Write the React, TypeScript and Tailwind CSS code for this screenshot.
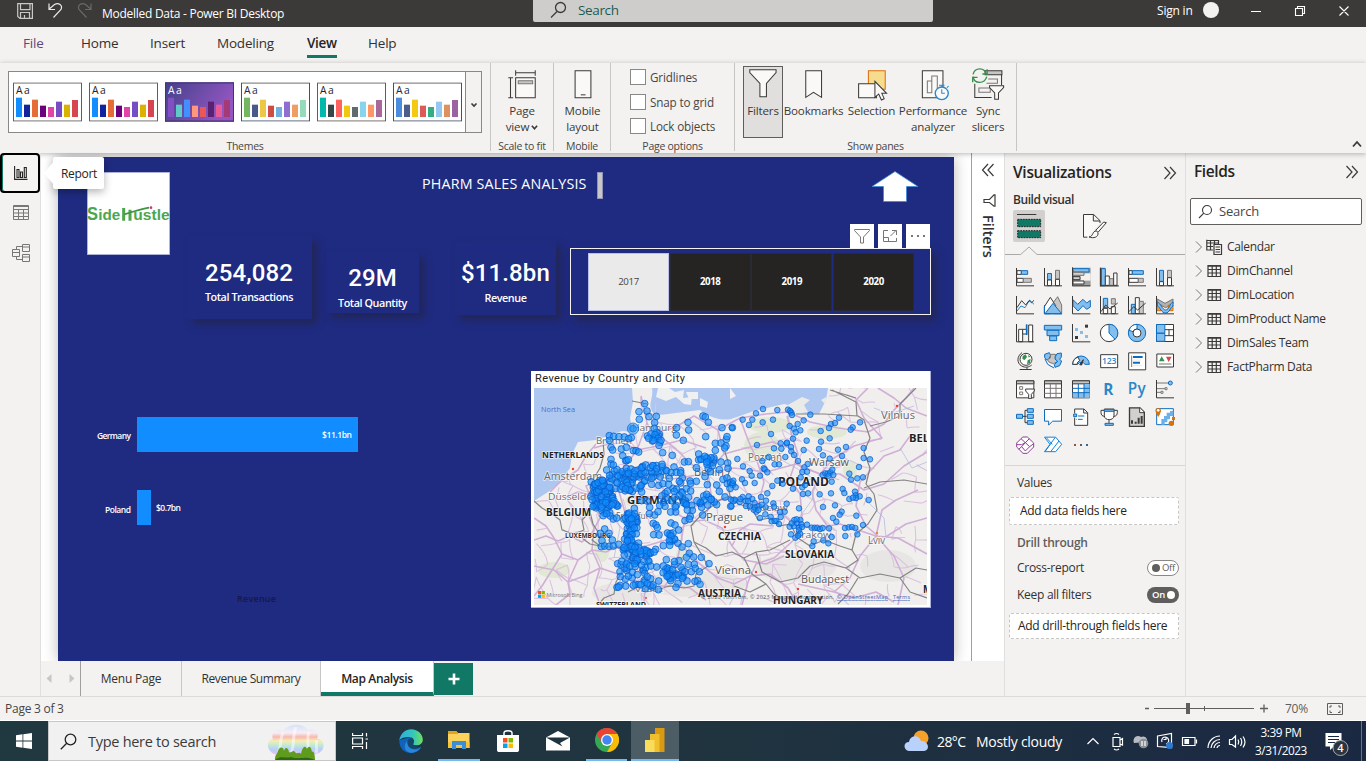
import React from "react";

const D = "#3b3a39";
const B = "#0f6cbd";
const L = "#83beec";
const G = "#c8c6c4";
const GR = "#797775";
const W = "#ffffff";
const O = "#d8700c";

type Shape = [d: string, fill: string, stroke?: string, width?: number];

const box = (x: number, y: number, w: number, h: number) => `M${x} ${y}h${w}v${h}h${-w}z`;
const dot = (x: number, y: number, r: number) => `M${x - r} ${y}a${r} ${r} 0 1 0 ${2 * r} 0a${r} ${r} 0 1 0 ${-2 * r} 0z`;

function Glyph({ view, shapes, className }: { view: string; shapes: Shape[]; className: string }) {
  return (
    <svg viewBox={view} className={className} preserveAspectRatio="none">
      {shapes.map(([d, fill, stroke, width], i) => (
        <path key={i} d={d} fill={fill} stroke={stroke ?? "none"} strokeWidth={width ?? 3} />
      ))}
    </svg>
  );
}

/* ---------- Title bar ---------- */

function TitleBar() {
  return (
    <div className="flex h-[27px] bg-[#3b3a39] text-white">
      <div className="flex w-[533px] items-start">
        <svg viewBox="0 0 102 27" className="h-[27px] w-[102px]" fill="none" stroke="#c9c8c7" strokeWidth="1.2">
          <path d="M17.7 3.6H32.400V18.400H20L17.700 16.500ZM20.500 3.600V9.600H30V3.600M20.500 18.400V12.500H29.500V18.400M24.500 15V18" />
          <path d="M49 3.500V9.500H55M49.200 9L54.500 4.600C58.500 2 63 5.500 61 9.500L53.500 17.500" stroke="#e8e8e8" />
          <path d="M91 3.500V9.500H85M90.800 9L85.500 4.600C81.500 2 77 5.500 79 9.500L86.500 17.500" stroke="#6b6967" />
        </svg>
        <span className="mt-[5px] text-[12px] leading-[17px] tracking-[-0.27px]">Modelled Data - Power BI Desktop</span>
      </div>
      <div className="flex h-[22px] w-[400px] items-start rounded-b-[2px] bg-[#cfcdcc] pl-[17px] text-[#1b5c50]">
        <svg viewBox="0 0 17 20" className="h-[20px] w-[17px]" fill="none" stroke="#3b3a39" strokeWidth="1.3">
          <circle cx="10.500" cy="7.500" r="5" />
          <path d="M7 11.500L1 17.500" />
        </svg>
        <span className="ml-[11px] mt-[1px] text-[13.5px] leading-[18px] tracking-[-0.35px]">Search</span>
      </div>
      <div className="flex flex-1 items-start">
        <span className="ml-[224px] mt-[3px] w-[46px] text-[12px] leading-[16px] tracking-[-0.2px]">Sign in</span>
        <span className="mt-[2px] size-[16px] rounded-full bg-[#f3f2f1]" />
        <svg viewBox="0 0 147 27" className="h-[27px] w-[147px]" fill="none" stroke="#fff" strokeWidth="1.100">
          <path d="M32 11.500H42M78.500 8.500V6.500H85.500V13.500H83.500M76.500 8.500H83.500V15.500H76.500ZM120.500 6.500L129.500 15.500M129.500 6.500L120.500 15.500" />
        </svg>
      </div>
    </div>
  );
}

/* ---------- Ribbon ---------- */

function RibbonTabs() {
  return (
    <div className="flex h-[36px] items-start pt-[7px] text-[13.5px] leading-[19px] tracking-[-0.2px] text-[#323130]">
      <span className="w-[59px] pl-[23px] text-[#5b4a78]">File</span>
      <span className="ml-[22px] w-[69px]">Home</span>
      <span className="w-[67px]">Insert</span>
      <span className="w-[90px]">Modeling</span>
      <span className="h-[24px] w-[30px] border-b-[3px] border-[#117865] font-semibold tracking-[-0.3px] text-[#252423]">View</span>
      <span className="ml-[31px]">Help</span>
    </div>
  );
}

const heights = [58, 37, 52, 34, 30, 46, 37, 51];
const themes = [
  { aa: "#252423", edge: "#605e5c", c: ["#118dff", "#12239e", "#e66c37", "#6b007b", "#e044a7", "#744ec2", "#d9b300", "#d64550"] },
  { aa: "#252423", edge: "#605e5c", c: ["#118dff", "#12239e", "#e66c37", "#6b007b", "#e044a7", "#744ec2", "#d9b300", "#d64550"] },
  { aa: "#ffffff", edge: "#43356b", c: ["#8250c4", "#5ecbc8", "#438fff", "#ff977e", "#eb5757", "#5b2071", "#ec5a96", "#a43b76"] },
  { aa: "#1b2a4a", edge: "#47506b", c: ["#73b761", "#4a588a", "#ecc846", "#cd4c46", "#71afe2", "#8d6fd1", "#ee9e64", "#95dabb"] },
  { aa: "#252423", edge: "#605e5c", c: ["#01b8aa", "#374649", "#fd625e", "#f2c80f", "#5f6b6d", "#8ad4eb", "#fe9666", "#a66999"] },
  { aa: "#1b2a4a", edge: "#47506b", c: ["#4a8ddc", "#4c5d8a", "#f3c911", "#dc5b57", "#33ae81", "#95c8f0", "#dd915f", "#9a64a0"] },
];

function ThemeThumb({ theme, index }: { theme: (typeof themes)[number]; index: number }) {
  return (
    <svg viewBox="0 0 207 120" className="h-[40px] w-[69px]">
      <defs>
        <linearGradient id="purple" x1="0" x2="1" y1="0" y2="0.4">
          <stop offset="0" stopColor="#44418a" />
          <stop offset="1" stopColor="#9256c2" />
        </linearGradient>
      </defs>
      <rect x="1.500" y="3" width="204" height="114" fill={index === 2 ? "url(#purple)" : "#fff"} stroke={theme.edge} strokeWidth="3" />
      <path d="M0 1.500H207M0 118.500H207" stroke={index === 2 ? "#5a4a90" : "#c8c6c4"} strokeWidth="3" />
      <text x="9" y="37" fontSize="31" fill={theme.aa} textLength="41">Aa</text>
      {heights.map((h, i) => (
        <rect key={i} x={9 + i * 24} y={105 - h} width="18" height={h} fill={theme.c[i]} />
      ))}
    </svg>
  );
}

function Group({ label, width, children }: { label: string; width: string; children: React.ReactNode }) {
  return (
    <div className={`flex h-[88px] flex-col border-r border-[#c8c6c4] ${width}`}>
      <div className="flex h-[76px] shrink-0">{children}</div>
      <div className="text-center text-[10.500px] leading-[15px] tracking-[-0.25px] text-[#484644]">{label}</div>
    </div>
  );
}

const ribbonIcons: Record<string, Shape[]> = {
  page: [
    ["M103.500 210V226M160.500 210V226M103.500 217.500H160.500M82 232.500H96M82 292.500H96M88.500 232.500V292.500", "none", D],
    [box(103.500, 232.500, 57, 60), "#faf9f8", D],
    [box(111, 241, 42, 9), G, GR],
  ],
  mobile: [[box(274.500, 211.500, 46, 81), "#faf9f8", D], ["M291 283.500H305", "none", D]],
  filters: [["M781.500 211.500H858V220L830 252V292.500H811V252L781.500 220Z", "#faf9f8", D]],
  bookmarks: [["M945.500 211.500H991.500V291L968 276L945.500 291Z", "#faf9f8", D]],
  selection: [
    [box(1125, 211.500, 49, 55), "#f8dc8e", O],
    [box(1096.500, 250.500, 52, 42), "#faf9f8", D],
    ["M1144 243V291L1155 281L1163 299L1171 295L1164 279H1178Z", "#faf9f8", D],
  ],
  performance: [
    [box(1285.500, 211.500, 60, 81), "#faf9f8", D],
    ["M1300 277V242H1313V277ZM1313 277V227H1329V277", "none", GR],
    [dot(1342, 279, 19), "#faf9f8", "#2b88c8", 4],
    ["M1342 267V279H1351M1334 255H1350M1342 255V261M1357 262L1362 257", "none", "#2b88c8"],
  ],
  sync: [
    [box(1466, 211.500, 49, 12), G, D],
    ["M1514 223V254M1436 250V291.500H1485", "none", D],
    ["M1475 236H1502V249H1470M1448 263H1481V276H1448Z", "none", GR],
    ["M1479 256.500H1520V262L1505 278V297H1494V278L1479 262Z", "#faf9f8", D],
    ["M1431 222C1436 200 1465 200 1469 222M1471 229C1464 252 1435 252 1431 229", "none", "#35914a", 4],
    ["M1458 221H1472V207M1444 231H1430V246", "none", "#35914a", 4],
  ],
};

function RibbonButton({ icon, view, lines, width, active }: { icon: string; view: string; lines: React.ReactNode[]; width: string; active?: boolean }) {
  return (
    <div className={`mt-[3px] flex h-[72px] shrink-0 flex-col items-center ${width} ${active ? "border border-[#605e5c] bg-[#e1dfdd]" : "pt-px"}`}>
      <Glyph view={view} shapes={ribbonIcons[icon]} className="h-[34px] w-[34px] shrink-0" />
      <div className="mt-[2px] text-center text-[11.600px] leading-[15.600px] tracking-[-0.17px] text-[#3b3a39]">
        {lines.map((l, i) => (
          <div key={i} className="whitespace-nowrap">{l}</div>
        ))}
      </div>
    </div>
  );
}

function Ribbon() {
  return (
    <div className="relative z-10 flex h-[90px] bg-[#f3f2f1] shadow-[0_1px_5px_rgba(0,0,0,0.28)]">
      <Group label="Themes" width="w-[491px]">
        <div className="ml-[8px] mt-[8px] flex h-[62px] w-[474px] border border-[#8a8886] bg-white">
          <div className="flex flex-1 gap-[7px] pl-[4px] pt-[10px]">
            {themes.map((t, i) => (
              <ThemeThumb key={i} theme={t} index={i} />
            ))}
          </div>
          <div className="flex w-[16px] items-center justify-center border-l border-[#8a8886] bg-[#f3f2f1]">
            <svg viewBox="0 0 8 8" className="mt-[6px] size-[8px]" fill="none" stroke={D} strokeWidth="1.600">
              <path d="M1.500 2.500L4 5L6.500 2.500" />
            </svg>
          </div>
        </div>
      </Group>
      <Group label="Scale to fit" width="w-[63px]">
        <RibbonButton
          icon="page"
          view="72.500 200 99 102"
          width="w-[62px]"
          lines={["Page", <span key="v" className="flex items-center justify-center">view<svg viewBox="0 0 8 8" className="ml-[2px] mt-[2px] size-[7px]" fill="none" stroke={D} strokeWidth="1.800"><path d="M1 2L4 5.500L7 2" /></svg></span>]}
        />
      </Group>
      <Group label="Mobile" width="w-[57px]">
        <RibbonButton icon="mobile" view="248 200 99 102" width="w-[57px]" lines={["Mobile", "layout"]} />
      </Group>
      <Group label="Page options" width="w-[124px]">
        <div className="ml-[19px] mt-[6px] flex flex-col gap-[8.500px]">
          {["Gridlines", "Snap to grid", "Lock objects"].map((t) => (
            <div key={t} className="flex h-[16px] items-center text-[11.700px] tracking-[-0.15px] text-[#484644]">
              <span className="mr-[4px] size-[16px] border border-[#8a8886] bg-white" />
              <span className="mt-[2px] whitespace-nowrap">{t}</span>
            </div>
          ))}
        </div>
      </Group>
      <Group label="Show panes" width="w-[282px]">
        <div className="ml-[8px] flex">
          <RibbonButton icon="filters" view="770.500 203 99 102" width="w-[40px]" lines={["Filters"]} active />
          <RibbonButton icon="bookmarks" view="920 200 99 102" width="w-[61px]" lines={["Bookmarks"]} />
          <RibbonButton icon="selection" view="1086 200 99 102" width="w-[55px]" lines={["Selection"]} />
          <RibbonButton icon="performance" view="1267 200 99 102" width="w-[68px]" lines={["Performance", "analyzer"]} />
          <RibbonButton icon="sync" view="1425 200 99 102" width="w-[42px]" lines={["Sync", "slicers"]} />
        </div>
      </Group>
      <div className="flex flex-1 items-end justify-end pb-[5px] pr-[4px]">
        <svg viewBox="0 0 10 8" className="h-[8px] w-[10px]" fill="none" stroke={D} strokeWidth="1.800">
          <path d="M1 6.500L5 2L9 6.500" />
        </svg>
      </div>
    </div>
  );
}

/* ---------- Left rail ---------- */

function Rail() {
  return (
    <div className="relative z-20 w-[41px] shrink-0 border-r border-[#e1dfdd] bg-[#f3f2f1]">
      <div className="flex h-[40px] w-[40px] items-center justify-center rounded-[4px] border-2 border-black bg-[#f5f4f3] shadow-[inset_1px_0_0_#117865]">
        <svg viewBox="0 0 14 14" className="ml-[1px] size-[14px]" fill="none" stroke="#252423" strokeWidth="1.100">
          <path d="M.600 0V13.400H13.500M3 3.500H5V11.500H3ZM6.500 6H8.500V11.500H6.500ZM10.300 1.500H12.300V11.500H10.300Z" />
        </svg>
      </div>
      <svg viewBox="0 0 40 80" className="h-[80px] w-[40px]" fill="none" stroke="#797775" strokeWidth="1">
        <path d="M13.500 12.500H28.500V26.500H13.500ZM13.500 13.500H28.500M13.500 16.500H28.500M13.500 20H28.500M13.500 23.500H28.500M18.500 16.500V26.500M23.500 16.500V26.500" />
        <path d="M12.500 56.500H19.500V63.500H12.500ZM12.500 59.500H19.500M22.500 51.500H29.500V58.500H22.500ZM22.500 54H29.500M22.500 61.500H29.500V68.500H22.500ZM22.500 64H29.500M16.500 56.500V53.500H22.500M16.500 63.500V66.500H22.500" />
      </svg>
      <div className="absolute left-[53px] top-[4px] flex h-[32px] w-[51px] items-center rounded-[2px] bg-white pl-[8px] pt-[2px] text-[12px] tracking-[-0.3px] text-[#252423] shadow-[0_3px_9px_rgba(0,0,0,0.3)]">
        <svg viewBox="0 0 10 24" className="absolute -left-[9px] top-[4px] h-[24px] w-[10px]">
          <path d="M10 0L0 12L10 24Z" fill="#fff" />
        </svg>
        Report
      </div>
    </div>
  );
}

/* ---------- Report canvas ---------- */

function Card({ value, label, className, labelGap }: { value: string; label: string; className: string; labelGap: string }) {
  return (
    <div className={`flex flex-col items-center shadow-[5px_5px_7px_rgba(34,38,84,0.9)] ${className}`}>
      <div className="whitespace-nowrap font-['Roboto'] text-[24px] font-medium leading-[26px] tracking-[0.1px] text-white">{value}</div>
      <div className={`whitespace-nowrap text-[10.800px] font-semibold leading-[14px] tracking-[-0.42px] text-white ${labelGap}`}>{label}</div>
    </div>
  );
}

function Logo() {
  return (
    <svg viewBox="0 0 249 249" className="ml-[29px] mt-[15px] h-[83px] w-[83px] shrink-0">
      <rect x="1" y="1" width="247" height="247" fill="#fff" stroke="#aab2da" strokeWidth="2" />
      <g fill="#4da64d" fontFamily="Liberation Sans" fontWeight="700" fontSize="45">
        <text x="0" y="145" fontSize="56" textLength="33" lengthAdjust="spacingAndGlyphs">S</text>
        <text x="34" y="145" textLength="66" lengthAdjust="spacingAndGlyphs">ide</text>
        <text x="139" y="145" textLength="109" lengthAdjust="spacingAndGlyphs">ustle</text>
      </g>
      <path d="M110 108V146M129 113V146" stroke="#4da64d" strokeWidth="9" />
      <path d="M112 127C128 122 160 112 186 107" stroke="#3d9442" strokeWidth="5" fill="none" />
      <circle cx="192" cy="107" r="4" fill="#d6336c" />
    </svg>
  );
}

function Slicer() {
  return (
    <div className="w-[361px]">
      <div className="flex justify-end gap-[4px] pr-px">
        <div className="flex size-[24px] items-center justify-center bg-white">
          <svg viewBox="0 0 16 16" className="size-[16px]" fill="none" stroke="#797775" strokeWidth="1">
            <path d="M.500 1.500H15.500V2.500L9.500 9V15H6.500V9L.500 2.500Z" />
          </svg>
        </div>
        <div className="flex size-[24px] items-center justify-center bg-white">
          <svg viewBox="0 0 16 16" className="size-[16px]" fill="none" stroke="#797775" strokeWidth="1">
            <path d="M6 2.500H1.500V13.500H14.500V10M1.500 9.500H6.500V13.500M8.500 8L14 2.500M10 2.500H14.500V7" />
          </svg>
        </div>
        <div className="flex size-[24px] items-center justify-center gap-[4px] bg-white">
          <span className="size-[2px] bg-[#797775]" />
          <span className="size-[2px] bg-[#797775]" />
          <span className="size-[2px] bg-[#797775]" />
        </div>
      </div>
      <div className="flex h-[67px] gap-[0.700px] border border-[#f3f2f1] pl-[17px] pt-[4px] shadow-[5px_6px_8px_rgba(34,38,84,0.9)]">
        {["2017", "2018", "2019", "2020"].map((y, i) => (
          <div
            key={y}
            className={`flex h-[58px] w-[81px] items-center justify-center text-[9.700px] tracking-[-0.4px] ${i === 0 ? "border border-[#b9c0e8] bg-[#eaeaea] text-[#484644]" : "border border-[#2a2a35] bg-[#252423] font-bold text-white"}`}
          >
            {y}
          </div>
        ))}
      </div>
    </div>
  );
}

function BarChart() {
  return (
    <svg viewBox="58 371 473 290" className="h-[290px] w-[473px] shrink-0">
      <rect x="137" y="417" width="221" height="35" fill="#118dff" />
      <rect x="137" y="490" width="14" height="35" fill="#118dff" />
      <g fill="#fff" fontSize="8.500" fontWeight="600">
        <text x="97" y="439" textLength="34">Germany</text>
        <text x="105" y="513" textLength="26">Poland</text>
        <text x="322" y="438" textLength="30">$11.1bn</text>
        <text x="156" y="511" textLength="25">$0.7bn</text>
      </g>
      <text x="237" y="602" fontSize="9" fontWeight="600" fill="#17184a" textLength="39">Revenue</text>
    </svg>
  );
}

/* ---------- Map ---------- */

const westPoints = `359 116 342 140 366 138 372 155 394 154 343 163 389 173 324 191 388 190 319 218 253 212 266 214 282 215 298 216 311 221 253 226 258 247 263 255 289 252 304 247 325 257 333 257 341 261 367 213 378 207 390 209 399 220 405 232 402 241 385 226 371 220 408 226 455 188 454 210 475 226 491 195 489 172 534 153 541 156 550 172 591 188 622 188 542 215 571 235 588 234 604 223 606 215 603 243 599 249 571 256 521 267 413 263 442 271 447 306 478 291 490 290 467 317 514 308 588 291 608 294 583 314 609 310 258 283 258 297 265 300 293 272 302 287 305 287 310 284 245 315 268 318 276 314 304 310 318 312 310 325 330 317 350 308 362 300 376 308 384 302 395 311 412 305 411 298 425 318 439 323 454 322 467 324 472 339 467 354 463 349 495 348 514 349 497 355 540 335 547 359 556 320 575 360 583 379 594 343 606 339 607 356 617 352 623 358 615 370 600 396 617 424 625 407 575 419 568 411 559 402 551 396 545 388 548 420 558 404 530 427 533 450 516 407 502 436 487 435 496 454 480 467 493 462 452 441 451 426 437 441 420 424 404 421 389 450 374 427 373 446 399 440 366 408 350 407 350 381 380 358 401 361 414 356 431 358 433 340 427 379 448 379 449 397 463 392 484 371 497 378 328 430 329 446 319 461 256 453 265 462 275 459 245 446 239 492 226 505 252 505 262 525 231 527 229 545 239 543 252 544 265 543 281 538 297 548 385 475 393 480 397 488 386 509 402 510 438 474 450 480 461 495 444 504 438 513 433 527 434 541 415 542 459 535 471 546 490 536 493 565 484 577 462 587 448 590 424 584 415 603 395 606 377 603 392 553 387 561 506 576 529 577 552 596 508 598 490 598 480 620 499 620 511 610 523 620 518 647 525 658 510 649 486 648 472 640 459 655 453 667 437 647 426 634 401 648 377 641 400 674 384 660 367 656 361 671 347 659 325 661 302 663 285 661 276 667 281 666 285 620 286 635 310 633 322 622 337 629 359 625 367 635 278 596 290 589 304 597 315 603 329 596`
  .split(" ").map(Number);

const eastPoints = `6 188 38 164 78 145 99 132 142 135 174 134 180 138 184 143 186 150 241 149 327 158 67 164 57 180 98 172 129 164 221 166 203 177 179 183 192 191 197 202 211 196 303 177 315 174 297 189 272 198 390 172 368 187 362 194 123 207 81 240 189 221 230 227 273 230 299 220 152 235 170 235 171 233 132 250 154 251 183 246 184 259 192 270 221 255 267 252 324 254 348 246 401 249 401 279 420 283 279 271 336 273 299 281 166 276 116 276 97 288 22 282 39 304 59 318 65 332 101 310 104 313 112 322 90 332 134 298 147 298 204 288 233 297 223 307 217 321 231 320 212 337 36 343 45 354 74 354 8 354 17 367 142 347 158 356 127 363 189 371 217 367 225 360 219 387 234 385 269 388 303 385 305 350 278 330 286 325 293 326 301 322 307 314 296 332 310 330 358 326 363 344 382 340 399 337 387 306 338 372 343 384 375 380 377 391 389 394 378 399 358 402 369 398 416 405 112 385 93 396 108 407 130 415 56 394 38 396 29 411 14 404 3 404 47 408 67 402 74 414 48 423 60 424 75 427 86 424 95 419 79 440 71 434 85 435 106 448 90 459 107 427 122 456 125 469 139 468 147 477 134 468 152 456 164 440 150 441 132 425 170 416 207 430 279 426 315 421 335 440 329 449 309 459 319 470 379 452 399 480 231 479 179 485 192 483 201 474 211 465 214 478 207 488 216 486 193 465 200 463 185 475 207 496 210 506 196 518 183 508 204 512 245 488 254 489 262 489 270 492 278 489 297 490 251 529 280 526 247 543 295 535 305 516 346 513 345 489 356 487 366 486 376 489 382 508 4 423 31 402 54 408 10 347`
  .split(" ").map(Number);

const clusters = [
  [228, 395, 36, 44, 62], [300, 350, 60, 32, 50], [375, 320, 55, 20, 20], [250, 430, 30, 28, 20], [316, 480, 26, 38, 38],
  [318, 548, 26, 40, 30], [355, 585, 36, 32, 28], [448, 622, 36, 26, 22], [548, 295, 32, 22, 16], [446, 405, 50, 36, 12],
  [508, 408, 36, 26, 12], [436, 520, 14, 26, 7], [385, 215, 24, 18, 6], [305, 620, 28, 36, 8], [365, 655, 34, 14, 6], [218, 355, 22, 18, 12],
];

function randomizer(start: number) {
  let seed = start;
  return () => {
    seed = (seed * 16807) % 2147483647;
    return seed / 2147483647;
  };
}

function scatter() {
  const next = randomizer(7);
  const out: number[] = [];
  for (const [cx, cy, rx, ry, n] of clusters) {
    for (let i = 0; i < n; i++) {
      const a = next() * Math.PI * 2;
      const r = Math.sqrt(next());
      out.push(cx + Math.cos(a) * r * rx, cy + Math.sin(a) * r * ry);
    }
  }
  return out;
}

/* Secondary roads: a jittered grid of towns joined to their neighbours. */
function minorRoads() {
  const next = randomizer(4211);
  const cols = 31;
  const rows = 18;
  const node = Array.from({ length: cols * rows }, (_, i) => [
    (i % cols) * 13.3 - 2 + (next() - 0.5) * 10,
    Math.floor(i / cols) * 13 - 2 + (next() - 0.5) * 10,
  ]);
  const land = ([x, y]: number[]) => (x < 98 ? y > 112 - x * 0.78 : x < 128 ? y > 2 : x < 292 ? y > 30 : true);
  let d = "";
  const link = (a: number[], b: number[], p: number) => {
    const roll = next();
    const jx = (next() - 0.5) * 5;
    const jy = (next() - 0.5) * 5;
    if (roll > p || !land(a) || !land(b)) return;
    d += `M${a[0].toFixed(1)} ${a[1].toFixed(1)}Q${((a[0] + b[0]) / 2 + jx).toFixed(1)} ${((a[1] + b[1]) / 2 + jy).toFixed(1)} ${b[0].toFixed(1)} ${b[1].toFixed(1)}`;
  };
  for (let r = 0; r < rows - 1; r++) {
    for (let c = 0; c < cols - 1; c++) {
      const p = c > 23 ? 0.16 : 0.42;
      const i = r * cols + c;
      link(node[i], node[i + 1], p);
      link(node[i], node[i + cols], p);
      link(node[i], node[i + cols + 1], p * 0.5);
    }
  }
  return d;
}

function Bubbles({ points, r }: { points: number[]; r: number }) {
  const pairs: [number, number][] = [];
  for (let i = 0; i + 1 < points.length; i += 2) pairs.push([points[i], points[i + 1]]);
  return (
    <g fill="#118dff" fillOpacity="0.6" stroke="#0a5cc8" strokeOpacity="0.85" strokeWidth="2.600">
      {pairs.map(([x, y], i) => (
        <circle key={i} cx={x} cy={y} r={r} />
      ))}
    </g>
  );
}

const labels: { t: string; x: number; y: number; w: number; s: number; c: string; b?: boolean }[] = [
  { t: "North Sea", x: 7, y: 23.5, w: 34, s: 7.5, c: "#4a6fc4" },
  { t: "Hamburg", x: 98, y: 43, w: 45, s: 9.5, c: "#6b6b70" },
  { t: "Bremen", x: 62, y: 56, w: 36, s: 9.5, c: "#6b6b70" },
  { t: "NETHERLANDS", x: 8, y: 69.5, w: 62, s: 8.5, c: "#222", b: true },
  { t: "Amsterdam", x: 10, y: 92, w: 58, s: 10, c: "#66666b" },
  { t: "Hannover", x: 95, y: 91, w: 45, s: 10, c: "#6b6b70" },
  { t: "Berlin", x: 160, y: 88, w: 30, s: 10.5, c: "#55555a" },
  { t: "Düsseldorf", x: 14, y: 112, w: 52, s: 9.5, c: "#6b6b70" },
  { t: "GERMANY", x: 93, y: 116, w: 57, s: 11, c: "#222", b: true },
  { t: "BELGIUM", x: 12, y: 128, w: 45, s: 10, c: "#222", b: true },
  { t: "Frankfurt", x: 82, y: 131, w: 36, s: 9, c: "#6b6b70" },
  { t: "LUXEMBOURG", x: 31, y: 149.5, w: 46, s: 6.5, c: "#333", b: true },
  { t: "Prague", x: 172, y: 133, w: 37, s: 10.5, c: "#55555a" },
  { t: "CZECHIA", x: 184, y: 151.5, w: 43, s: 10, c: "#222", b: true },
  { t: "Vienna", x: 181, y: 186, w: 36, s: 10.5, c: "#55555a" },
  { t: "AUSTRIA", x: 164, y: 209, w: 43, s: 10, c: "#222", b: true },
  { t: "Vaduz", x: 101, y: 204, w: 28, s: 8, c: "#6b6b70" },
  { t: "SWITZERLAND", x: 62, y: 219, w: 50, s: 7.5, c: "#222", b: true },
  { t: "Poznań", x: 214, y: 73, w: 34, s: 10, c: "#6b6b70" },
  { t: "Warsaw", x: 275, y: 78, w: 40, s: 11, c: "#55555a" },
  { t: "POLAND", x: 244, y: 98, w: 51, s: 12, c: "#222", b: true },
  { t: "Wroclaw", x: 212, y: 123, w: 42, s: 9.5, c: "#6b6b70" },
  { t: "Kraków", x: 261, y: 150, w: 36, s: 9.5, c: "#6b6b70" },
  { t: "Lviv", x: 334, y: 156, w: 17, s: 10, c: "#6b6b70" },
  { t: "SLOVAKIA", x: 251, y: 169.5, w: 49, s: 10, c: "#222", b: true },
  { t: "Budapest", x: 267, y: 195, w: 48, s: 10.5, c: "#55555a" },
  { t: "HUNGARY", x: 239, y: 216, w: 50, s: 10, c: "#222", b: true },
  { t: "Vilnius", x: 347, y: 31, w: 34, s: 10, c: "#66666b" },
  { t: "BELARUS", x: 375, y: 54, w: 50, s: 11, c: "#222", b: true },
  { t: "MOLDOVA", x: 389, y: 205, w: 50, s: 10, c: "#222", b: true },
];

function CityMap() {
  return (
    <svg viewBox="0 0 393 217" className="ml-[3px] h-[217px] w-[393px] overflow-hidden">
      <rect width="393" height="217" fill="#f1efed" />
      <g fill="#dce8cd" opacity="0.75">
        <ellipse cx="228" cy="58" rx="18" ry="14" />
        <ellipse cx="236" cy="37" rx="22" ry="8" />
        <ellipse cx="293" cy="44" rx="20" ry="7" />
        <ellipse cx="68" cy="160" rx="8" ry="14" />
        <ellipse cx="151" cy="166" rx="9" ry="7" />
        <ellipse cx="100" cy="113" rx="9" ry="6" />
        <ellipse cx="316" cy="82" rx="7" ry="10" />
        <ellipse cx="20" cy="182" rx="16" ry="8" />
      </g>
      <g fill="#e6e5e2" opacity="0.8">
        <ellipse cx="160" cy="196" rx="52" ry="13" />
        <ellipse cx="262" cy="180" rx="40" ry="14" />
        <ellipse cx="354" cy="178" rx="28" ry="16" />
        <ellipse cx="88" cy="205" rx="30" ry="10" />
      </g>
      <path d="M0 0H98L99 14L96 30L99 44L88 43L74 48L62 52L44 54L38 66L36 80L26 95L14 104L0 113Z" fill="#adc7f1" />
      <path d="M118 0C120 12 112 16 120 26C130 28 138 25 150 24L166 22C176 30 188 33 197 31L220 23L250 16L258 18L262 25L285 26L292 12L294 0Z" fill="#adc7f1" />
      <path d="M135 0L141 4L150 2L149 10L158 9L157 17L150 16L142 9L132 13L122 9L124 0ZM152 4H164V11H155ZM166 10L174 14L173 20L166 18ZM196 0L202 8L196 11Z" fill="#eef0f1" />
      <path d="M252 18L268 9L276 12L270 17L274 24L261 26ZM287 12L292 9V17Z" fill="#e9ebe8" />
      <path d={minorRoads()} fill="none" stroke="#dac3df" strokeWidth="1.100" />
      <g fill="none" stroke="#d0afd6" strokeWidth="1.600" strokeLinejoin="round">
        <path d="M107 8L110 20L113 35L118 45L128 50L142 61L156 75L170 86M113 35L103 62L90 80L84 100L92 128L94 150L100 170L112 190L110 214M60 60L74 56L90 55L103 62L124 58L148 52L172 60M118 45L140 40L160 28L184 42L190 66L174 84L177 106L160 120L150 136L146 160L140 185L128 202" />
        <path d="M0 152L12 148L24 153L36 148L48 154L58 145L66 130L58 112L52 98L66 92L90 92L118 88L138 91L170 86L200 80L232 84L262 76L286 86L306 86L330 102L350 96L370 78L393 64" />
        <path d="M0 130L12 138L20 150L28 166L18 182L8 198L0 208M28 166L44 172L58 162L72 164L84 158L96 164L112 158L132 152L150 160L166 176L184 190L200 196L216 188L236 186L254 200L262 214" />
        <path d="M0 178L20 182L34 194L50 188L66 180L84 186L100 202L120 198L138 198L156 200L172 212M22 217L36 206L34 194L44 172M66 217L60 200L66 180L58 162L60 140L52 120" />
        <path d="M16 104L28 92L44 82L52 68L62 56M30 110L44 104L60 108L84 100L104 110L124 108L148 112L166 118L186 112L208 110L230 118L248 126L262 138L282 140L306 136L324 142L342 148L364 150L393 166" />
        <path d="M190 66L212 60L238 54L256 60L266 78L286 86L300 70L320 58L348 50L330 30L322 12L334 0M253 28L258 48L264 66L256 90L266 106L268 128L262 150L240 170L222 176L214 194L208 217M286 86L278 104L282 122L292 136L300 150" />
        <path d="M170 132L188 140L198 158L210 172L232 176L250 168M170 132L154 134L140 122L130 102L118 88M170 132L176 116L190 110M198 158L206 142L216 136L240 138" />
        <path d="M342 148L348 122L362 112L384 102M342 148L326 168L316 190L300 204L282 200L264 196M342 148L360 168L370 190L364 217M344 148L332 138L322 118L326 94M300 204L320 210L342 204L360 214" />
        <path d="M344 0L360 10L372 20L393 28M358 24L350 36L334 44M358 24L372 10L380 0M393 130L372 136L350 150M376 48L366 62L350 68L326 94M206 30L214 52L222 70L230 94L224 118M184 42L206 30L232 26L254 24L276 34L304 40L334 44" />
      </g>
      <g fill="none" stroke="#a8b9dc" strokeWidth="0.700">
        <path d="M160 60L166 80L182 94L190 110M254 26L258 50L244 70L262 80L282 92L278 112L262 134M84 96L78 120L86 140L80 170M330 110L350 130L352 150M366 60L378 80L393 74M340 20L356 26L380 18" />
      </g>
      <g fill="none" stroke="#858484" strokeWidth="1.200" strokeLinejoin="round">
        <path d="M98 13L113 16M69 52L70 66L66 80L60 90L56 100L60 110L56 124L59 136L64 144L58 152L66 158L84 160L98 165L90 180L82 194L80 206L70 210L64 217" />
        <path d="M0 113L8 120L18 126L26 132L28 142L40 146L50 142L48 132L54 126M48 150L56 156L66 158M94 204L106 198L120 202L136 198L150 200L160 198L162 186L174 178L166 164L160 154L157 138L168 126L186 112L196 108" />
        <path d="M191 64L196 80L193 92L196 108L204 116L218 120L224 132L236 130L246 138L256 136L264 150L276 158L290 152L306 158L318 162L322 146L334 136L343 122L340 106L332 96L336 80L330 64L336 50L330 32L324 28L290 26M262 26L290 26" />
        <path d="M160 154L172 160L182 168L198 164L210 170L222 164L236 162L256 152M222 164L228 184L246 194L264 190L276 178L290 174L312 180L324 172L318 162M312 180L326 190L346 186L366 190L382 180L393 182M210 170L218 186L232 196M330 100L346 94L370 92L393 96M336 38L352 34L366 28L366 16L382 0M323 28L322 14L310 8L298 2M296 2L322 10" />
        <path d="M200 198L216 204L232 196L240 206L254 214M324 190L314 206L304 216M366 190L376 204L393 210" />
      </g>
      <g>
        {labels.map((l) => (
          <text
            key={l.t}
            x={l.x}
            y={l.y}
            fontSize={l.s}
            fill={l.c}
            fontWeight={l.b ? 700 : 400}
            stroke="#fff"
            strokeOpacity={l.t === "North Sea" ? 0 : 0.7}
            strokeWidth="1.400"
            paintOrder="stroke"
            textLength={l.w}
            lengthAdjust="spacingAndGlyphs"
          >
            {l.t}
          </text>
        ))}
      </g>
      <path d={[dot(39, 81, 1.2), dot(191, 139, 1.2), dot(112, 210, 1), dot(222, 184, 1.2), dot(264, 201, 1.2), dot(363, 18, 1.2)].join("")} fill="#e8452c" />
      <circle cx="343" cy="145" r="1.200" fill="#ee8444" />
      <g transform="translate(-9 -23) scale(0.33333)">
        <Bubbles points={scatter()} r={10.2} />
        <Bubbles points={westPoints} r={10.2} />
        <circle cx="324" cy="191" r="17" fill="#118dff" fillOpacity="0.5" stroke="#0b62cf" strokeWidth="2" />
      </g>
      <g transform="translate(196 -23) scale(0.33333)">
        <Bubbles points={eastPoints} r={8.4} />
      </g>
      <path d={box(4, 203, 3.2, 3.2)} fill="#f25022" />
      <path d={box(7.700, 203, 3.2, 3.2)} fill="#7fba00" />
      <path d={box(4, 206.700, 3.2, 3.2)} fill="#00a4ef" />
      <path d={box(7.700, 206.700, 3.2, 3.2)} fill="#ffb900" />
      <text x="12.500" y="209" fontSize="5.500" fill="#777" textLength="36">Microsoft Bing</text>
      <text x="167" y="211" fontSize="5.500" fill="#555" textLength="133">© 2023 TomTom, © 2023 Microsoft Corporation,</text>
      <text x="303" y="211" fontSize="5.500" fill="#3b63b8" textDecoration="underline" textLength="51">© OpenStreetMap</text>
      <text x="359" y="211" fontSize="5.500" fill="#3b63b8" textDecoration="underline" textLength="17">Terms</text>
    </svg>
  );
}

function ReportPage() {
  return (
    <div className="h-[504px] w-[896px] bg-[#1f2b80] shadow-[0_0_14px_rgba(0,0,0,0.28)]">
      <div className="flex h-[67px] items-start">
        <Logo />
        <span className="ml-[252px] mt-[17px] w-[175px] whitespace-nowrap text-[14.300px] leading-[20px] tracking-[0.16px] text-white">PHARM SALES ANALYSIS</span>
        <span className="mt-[15px] h-[27px] w-[6px] border border-[#8f93b5] bg-[#c8c8c8]" />
        <svg viewBox="0 0 48 32" className="ml-[268px] mt-[14px] h-[32px] w-[48px]">
          <path d="M24 .500L47 15.500H35.500V30.500H12.500V15.500H1Z" fill="#fff" stroke="#3f8ad8" strokeWidth="0.800" />
        </svg>
      </div>
      <div className="flex h-[147px] items-start">
        <Card value="254,082" label="Total Transactions" className="ml-[130px] mt-[12px] h-[83px] w-[124px] pl-[2px] pt-[24px] pr-[4px]" labelGap="mt-[4px]" />
        <Card value="29M" label="Total Quantity" className="ml-[14px] mt-[28px] h-[61px] w-[93px] pt-[13px]" labelGap="mt-[5px]" />
        <Card value="$11.8bn" label="Revenue" className="ml-[36px] mt-[17px] h-[74px] w-[101px] pt-[19px]" labelGap="mt-[5px]" />
        <div className="ml-[14px]">
          <Slicer />
        </div>
      </div>
      <div className="flex">
        <BarChart />
        <div className="h-[237px] w-[400px] border-b border-r border-[#aab2da] bg-white">
          <div className="h-[17px] pl-[4px] font-['Roboto'] text-[11px] leading-[15px] tracking-[0.42px] text-[#252423]">Revenue by Country and City</div>
          <CityMap />
        </div>
      </div>
    </div>
  );
}

function PageTabs() {
  return (
    <div className="relative z-10 flex h-[35px] bg-[#f3f2f1] text-[12px] leading-[35px] tracking-[-0.3px] text-[#323130]">
      <div className="flex w-[40px] items-center justify-between border-r border-[#a19f9d] px-[5px]">
        <svg viewBox="0 0 6 9" className="h-[9px] w-[6px]"><path d="M5.500 0V9L.500 4.500Z" fill="#c8c6c4" /></svg>
        <svg viewBox="0 0 6 9" className="h-[9px] w-[6px]"><path d="M.500 0V9L5.500 4.500Z" fill="#c8c6c4" /></svg>
      </div>
      <div className="w-[101px] border-r border-[#c8c6c4] text-center tracking-[-0.2px]">Menu Page</div>
      <div className="w-[139px] border-r border-[#c8c6c4] text-center tracking-[-0.42px]">Revenue Summary</div>
      <div className="w-[113px] border-b-[4px] border-r border-b-[#117865] border-r-[#c8c6c4] bg-white text-center font-semibold tracking-[-0.35px] text-[#252423]">Map Analysis</div>
      <div className="mt-[2px] flex h-[32px] w-[39px] items-center justify-center bg-[#117865]">
        <svg viewBox="0 0 12 12" className="size-[12px]"><path d="M6 .500V11.500M.500 6H11.500" stroke="#fff" strokeWidth="2.600" /></svg>
      </div>
    </div>
  );
}

/* ---------- Right panes ---------- */

function DoubleChevron({ flip }: { flip?: boolean }) {
  return (
    <svg viewBox="0 0 14 14" className={`h-[14px] w-[14px] ${flip ? "-scale-x-100" : ""}`} fill="none" stroke={D} strokeWidth="1.200">
      <path d="M1.500 1L7 7L1.500 13M7 1L12.500 7L7 13" />
    </svg>
  );
}

function FiltersPane() {
  return (
    <div className="flex h-[508px] w-[33px] flex-col items-center border-l border-[#a19f9d] bg-white pt-[10px]">
      <DoubleChevron flip />
      <svg viewBox="0 0 13 13" className="ml-[2px] mt-[17px] size-[13px]" fill="none" stroke={D} strokeWidth="1.200">
        <path d="M12 .800V12.200H11L6.500 8.500H1V5.500H6.500L11 .800Z" />
      </svg>
      <span className="mt-[8px] font-semibold text-[14.500px] leading-[18px] tracking-[-0.05px] text-[#323130] [writing-mode:vertical-rl]">Filters</span>
    </div>
  );
}

const vizIcons: Shape[][] = [
  [[box(36, 47, 13, 11), W, D], [box(49, 47, 19, 11), L, B], [box(36, 70, 19, 12), W, D], [box(55, 70, 24, 12), G, GR], ["M34.500 39V92.500H87", "none", D]],
  [[box(127.500, 55.500, 12, 19), L, B], [box(127.500, 75, 12, 17), W, D], [box(151.500, 46, 12, 26), G, GR], [box(151.500, 73, 12, 19), W, D], ["M118.500 39V92.500H171", "none", D]],
  [[box(201, 38, 56, 56), "#a19f9d"], [box(226, 55, 31, 22), "#f3f2f1"], [box(204, 41, 48, 10), L, B], [box(204, 52, 33, 9), "#d2d0ce", GR], [box(204, 65, 21, 9), "#d2d0ce", D], [box(204, 78, 33, 9), W, D], ["M202.500 37V92.500H256", "none", D]],
  [[box(285, 38, 16, 56), "#a19f9d"], [box(289, 41, 12, 50), L, B], [box(301, 63, 12, 28), W, D], [box(314, 71, 11, 20), G, GR], [box(326, 54, 10, 37), W, D], ["M286.500 38V92.500H341", "none", D, 4]],
  [[box(372, 47, 10, 11), W, D], [box(382, 47, 33, 11), L, B], [box(372, 70, 28, 12), W, D], [box(400, 70, 15, 12), G, GR], ["M370.500 39V92.500H423", "none", D]],
  [[box(463.500, 46, 12, 33), L, B], [box(463.500, 80, 12, 12), W, D], [box(487.500, 46, 12, 22), G, GR], [box(487.500, 68, 12, 24), W, D], ["M454.500 39V92.500H507", "none", D]],
  [["M36 168L48 153L60 158L74 135L87 148", "none", "#2b88c8"], ["M36 158L50 137L62 150L72 137L80 143L87 136", "none", D], ["M34.500 123V176.500H87", "none", D]],
  [["M143 145L158 125L170 150V176H150Z", G, GR], ["M118 155L136 127L152 152L136 176H118Z", W, D], ["M120 176L144 145L170 176Z", L, B], ["M118.500 150V176.500H171", "none", B]],
  [["M204 134L218 148L234 133L245 144L256 136V156L245 163L234 152L219 168L204 152Z", L, B], ["M202.500 123V176.500H256", "none", D]],
  [[box(295, 130, 13, 28), L, B], [box(319, 131, 12, 16), G, GR], [box(295, 160, 13, 16), W, D], [box(319, 155, 12, 21), W, D], ["M288 170L302 150L315 162L338 144", "none", D], ["M286.500 123V176.500H340", "none", D]],
  [[box(379, 148, 12, 28), L, B], [box(391, 128, 12, 48), W, D], [box(403, 139, 12, 37), G, GR], ["M372 170L386 155L398 165L422 144", "none", D], ["M370.500 123V176.500H423", "none", D]],
  [["M457 132L480 145L504 132V146L482 158L457 146Z", "#b3b0ad", GR], [box(456, 150, 14, 17), "#f0a040", O], [box(490, 150, 14, 17), "#f0a040", O], ["M457 141C466 143 472 165 482 165C492 165 496 143 504 141V153C496 156 494 174 482 174C468 174 466 156 457 153Z", L, B], ["M454.500 123V176.500H507", "none", D]],
  [[box(41, 223, 12, 37), W, D], [box(53, 223, 12, 14), W, D], ["M65 208V240", "none", B, 5], [box(71, 210, 12, 50), W, D], ["M34.500 207V260.500H87", "none", D]],
  [[box(118, 211, 52, 14), L, B], [box(126, 226, 36, 16), L, B], [box(134, 243, 21, 14), L, B]],
  [[box(240, 209, 9, 9), D], [box(210, 219, 9, 9), L], [box(225, 228, 9, 9), L], [box(240, 240, 9, 9), L], [box(210, 243, 9, 9), D], ["M202.500 207V260.500H256", "none", D]],
  [[dot(312, 234, 26), W, D], ["M312 208A26 26 0 0 1 330 253L312 234Z", L, B]],
  [[dot(396, 234, 26), L, B], ["M372 226A26 26 0 0 1 396 208V222A13 13 0 0 0 384 230Z", W, B], [dot(396, 234, 12), W, D]],
  [[box(454.500, 208.500, 51, 51), W, D], [box(454.500, 208.500, 25, 26), L, B], [box(454.500, 235, 25, 24), L, B], ["M480 224H505M480 242H505M492 224V242", "none", D]],
  [[dot(63, 313, 18), W, D], ["M53 303L62 298L66 306L59 315L52 312ZM68 316L77 311L75 324L66 328ZM70 300L77 306L70 307Z", "#35914a"], ["M51 293C36 303 34 324 50 333C60 339 72 337 80 330M66 337V342M44 343.500H80", "none", D]],
  [["M119 298L133 293L137 301L131 314H124L119 308Z", L, B], ["M137 298H152L150 309L162 316L146 326L133 322L127 314L136 309Z", G, GR], ["M156 296L169 294V306L164 313L170 318L164 332L150 337L148 329L158 319L150 312L151 305Z", L, B], ["M120 312L128 328L147 339", "none", B]],
  [["M203 328A25 25 0 0 1 253 328H240A13 13 0 0 0 218 328Z", L, B], ["M203 328A25 25 0 0 1 219 306L224 317A13 13 0 0 0 216 328Z", W, D], ["M224 329L235 314L230 330Z", D, D]],
  [[box(287, 299, 51, 39), W, D]],
  [[box(371, 293.500, 51, 51), W, D], ["M380 302V336", "none", GR], ["M384 306H413M384 323H405", "none", B, 6], ["M384 315H408M384 332H413", "none", "#e8e8e8"]],
  [[box(455.500, 297, 50, 39), W, D], ["M462 319L470 304L479 319Z", "#35914a"], ["M483 305H500L491 321Z", "#e04343"], ["M462 327H499", "none", GR]],
  [[box(34.500, 377.500, 52, 51), W, D], [box(34.500, 377.500, 52, 9), G, D], [box(44, 395, 9, 8), W, GR], [box(44, 411, 9, 8), W, GR], ["M62 402H88V408L79 418V431H71V418L62 408Z", W, D]],
  [[box(118.500, 377.500, 51, 51), W, D], [box(118.500, 377.500, 51, 9), G, D], ["M118 400H170M118 415H170M136 387V428M153 387V428", "none", GR]],
  [[box(202.500, 377.500, 51, 51), W, D], [box(202.500, 377.500, 51, 9), G, D], [box(237, 387, 17, 41), L], [box(203, 412, 50, 16), L], ["M202 400H254M202 413H254M220 387V428M237 387V428", "none", B]],
  [], [],
  [["M456 384H489M456 401H480M456 412H468", "none", GR], [dot(496, 384, 6), L, B], [box(480, 398, 6, 6), W, GR], [box(468, 409, 6, 6), W, GR], ["M454.500 375V428.500H507", "none", D]],
  [["M53 484H65M60 466V503H67M60 466H67", "none", D], [box(34.500, 478, 18, 12), L, B], [box(67, 461, 18, 11), L, B], [box(67, 478, 18, 12), L, B], [box(67, 497, 18, 11), L, B]],
  [["M118.500 463.500H169.500V498.500H143L131 510V498.500H118.500Z", W, B]],
  [["M209 475V462H237L248 473V511H209V488", W, D], ["M236 462V474H248", "none", D], [box(206, 477, 9, 8), L, B], ["M219 483H238M219 493H233M213 493H215", "none", B]],
  [["M298 462H327V482C327 498 298 498 298 482ZM298 466H288V472C288 480 292 484 299 484M327 466H337V472C337 480 333 484 326 484M312 495V505", W, D], ["M298 464H327V469H298ZM300 505H325V511H300Z", L, B]],
  [["M373.500 458.500H405L418 472V514H373.500Z", "#d2d0ce", D, 4], ["M404 458V473H418", W, D], ["M381 506V496M392 506V500M401 506V488M410 506V483", "none", D, 6]],
  [[box(455, 461, 50, 48), "#ffffff", B], ["M474 509V497H482V488H490V478H500V468", "none", "#6ab0ea", 10], ["M451 465A9 9 0 0 1 468 465C468 474 460 486 460 486C460 486 451 474 451 465Z", O], [dot(459.500, 466, 4), W], [dot(499, 505, 8), O], [box(501, 486, 9, 9), O]],
  [
    ["M53 546H67L86 564V576L67 595H54L35 576V564Z", W, "#8e3f97"],
    ["M48 551L61 563L73 551M36 569H50L61 563M61 563L74 575L86 566M61 563L50 575L61 588L74 575M50 575L41 583", "none", "#8e3f97"],
  ],
  [["M118.500 546.500H152L170 568L152 590H118.500L135 568Z", W, "#1683d8"], ["M120 590L150 548M137 590L162 558M124 548L142 568", "none", "#1683d8"]],
];

function VizGrid() {
  const cells = vizIcons.map((shapes, i) => {
    const c = i % 6;
    const r = Math.floor(i / 6);
    return (
      <svg key={i} viewBox={`${30 + 84 * c} ${36 + 84 * r} 60 60`} className="size-[20px]">
        {shapes.map(([d, fill, stroke, w], k) => (
          <path key={k} d={d} fill={fill} stroke={stroke ?? "none"} strokeWidth={w ?? 3} />
        ))}
        {i === 21 && <text x="291" y="327" fontSize="26" fontWeight="600" fill="#2b88c8" textLength="43">123</text>}
        {i === 27 && <text x="295" y="419" fontSize="46" fontWeight="700" fill="#2b88c8">R</text>}
        {i === 28 && <text x="368" y="416" fontSize="46" fontWeight="600" fill="#2b88c8" textLength="54">Py</text>}
      </svg>
    );
  });
  return (
    <div className="grid grid-cols-[repeat(6,20px)] gap-[8px] pl-[10px] pt-[11px]">
      {cells}
      <div className="flex size-[20px] items-center justify-center gap-[4px]">
        <span className="size-[2px] bg-[#8a5a3c]" />
        <span className="size-[2px] bg-[#605e5c]" />
        <span className="size-[2px] bg-[#2b6a9c]" />
      </div>
    </div>
  );
}

function VisualizationsPane() {
  return (
    <div className="flex w-[182px] flex-col border-l border-r border-[#e1dfdd] bg-[#f3f2f1] text-[12px] tracking-[-0.28px] text-[#323130]">
      <div className="flex h-[39px] items-center justify-between pl-[8px] pr-[8px]">
        <span className="text-[15.500px] font-semibold tracking-[-0.3px] text-[#252423]">Visualizations</span>
        <DoubleChevron />
      </div>
      <div className="pl-[8px] text-[12px] font-semibold leading-[15px] tracking-[-0.45px]">Build visual</div>
      <svg viewBox="105 180 540 138" className="mt-[3px] h-[46px] w-[180px] shrink-0">
        <rect x="129" y="180" width="96" height="96" rx="6" fill="#d2d0ce" />
        <path d="M141 193.500H199" stroke={D} strokeWidth="3" />
        <path d="M143 208H212V230H143ZM143 242H212V263H143Z" fill="#117865" stroke="#252423" strokeWidth="3" strokeDasharray="5 3" />
        <path d="M352 261.500H340.500V193.500H371L390 212V219M370 194V213H390" fill="#faf9f8" stroke={D} strokeWidth="3" />
        <path d="M409 218L384 247L377 241L401 216ZM379 243C366 243 371 259 357 261C370 266 386 262 384 248" fill="#faf9f8" stroke={D} strokeWidth="3" />
        <path d="M105 313.500H152L177 291L201 313.500H645" fill="none" stroke="#979593" strokeWidth="2.400" />
      </svg>
      <VizGrid />
      <div className="mt-[10px] border-t border-[#d8d6d4] pl-[4px] pr-[6px] pt-[9px]">
        <div className="pl-[8px] leading-[16px]">Values</div>
        <div className="mt-[6px] flex h-[28px] items-center rounded-[2px] border border-dashed border-[#c8c6c4] bg-white pl-[10px] text-[12px] text-[#252423]">Add data fields here</div>
        <div className="mt-[9px] pl-[8px] font-semibold leading-[17px] tracking-[-0.25px] text-[#605e5c]">Drill through</div>
        <div className="mt-[8px] flex h-[17px] items-center justify-between pl-[8px]">
          Cross-report
          <span className="flex h-[16px] w-[32px] items-center gap-[2px] rounded-full border border-[#8a8886] bg-white pl-[4px] text-[9.500px] leading-none text-[#605e5c]">
            <span className="size-[8px] rounded-full bg-[#605e5c]" />
            <span className="pt-px">Off</span>
          </span>
        </div>
        <div className="mt-[10px] flex h-[17px] items-center justify-between pl-[8px]">
          Keep all filters
          <span className="flex h-[16px] w-[32px] items-center gap-[2px] rounded-full bg-[#605e5c] pl-[5px] text-[9.500px] font-semibold leading-none text-white">
            <span className="pt-px">On</span>
            <span className="size-[8px] rounded-full bg-white" />
          </span>
        </div>
        <div className="mt-[10px] flex h-[26px] items-center whitespace-nowrap rounded-[2px] border border-dashed border-[#c8c6c4] bg-white pl-[8px] text-[12px] text-[#252423]">Add drill-through fields here</div>
      </div>
    </div>
  );
}

const fields = ["Calendar", "DimChannel", "DimLocation", "DimProduct Name", "DimSales Team", "FactPharm Data"];

function FieldsPane() {
  return (
    <div className="flex-1 bg-[#f3f2f1] text-[#323130]">
      <div className="flex h-[38px] items-center justify-between pl-[8px] pr-[7px]">
        <span className="text-[15.500px] font-semibold tracking-[-0.4px] text-[#252423]">Fields</span>
        <DoubleChevron />
      </div>
      <div className="ml-[4px] mt-[7px] flex h-[27px] w-[172px] items-center rounded-[2px] border border-[#605e5c] bg-white pl-[7px]">
        <svg viewBox="0 0 15 15" className="size-[15px]" fill="none" stroke={D} strokeWidth="1.100">
          <circle cx="9" cy="6" r="4.500" />
          <path d="M5.800 9.200L1 14" />
        </svg>
        <span className="ml-[6px] mt-px text-[13px] tracking-[-0.2px] text-[#484644]">Search</span>
      </div>
      <div className="mt-[10px]">
        {fields.map((f, i) => (
          <div key={f} className="flex h-[24px] items-center pl-[9px] text-[12px] tracking-[-0.32px]">
            <svg viewBox="0 0 8 12" className="h-[12px] w-[8px]" fill="none" stroke="#797775" strokeWidth="1">
              <path d="M1 .500L6.500 6L1 11.500" />
            </svg>
            <svg viewBox="0 0 17 16" className="ml-[3px] mr-[4px] h-[16px] w-[17px]" fill="none" stroke={D} strokeWidth="1.200">
              {i === 0 ? (
                <>
                  <path d="M.800 1.500H12.500M.800 .800V11H7M.800 4H12.500M.800 7.500H7M4.500 1V11M8.500 1V5M12.500 1V5" />
                  <path d="M8 5.500H15.500V15.500H8ZM9.500 8H14M9.500 10.500H14M9.500 13H14" />
                </>
              ) : (
                <path d="M2 2.500H14.500V13.500H2ZM2 3.200H14.500M2 6.500H14.500M2 10H14.500M6.200 3V13.500M10.300 3V13.500" />
              )}
            </svg>
            {f}
          </div>
        ))}
      </div>
    </div>
  );
}

/* ---------- Status bar and taskbar ---------- */

function StatusBar() {
  return (
    <div className="flex h-[25px] items-center border-t border-[#dddbd9] border-b border-b-white bg-[#f3f2f1] text-[12px] tracking-[-0.25px] text-[#484644]">
      <span className="flex-1 pl-[5px]">Page 3 of 3</span>
      <svg viewBox="1140 697 140 24" className="h-[24px] w-[140px]" fill="none" stroke="#605e5c">
        <path d="M1145 708.500H1149M1260 708.500H1268M1264 704.500V712.500" strokeWidth="1.300" />
        <path d="M1154 708.500H1254M1204.500 706V711" />
        <path d="M1188 703V714" strokeWidth="4" />
      </svg>
      <span className="w-[47px] pl-[5px] text-[#605e5c]">70%</span>
      <svg viewBox="0 0 16 12" className="mr-[23px] h-[12px] w-[16px]" fill="none" stroke="#605e5c">
        <path d="M.500 .500H15.500V11.500H.500ZM3 5V3H5M11 3H13V5M3 7.500V9.500H5M11 9.500H13V7.500" />
      </svg>
    </div>
  );
}

function TaskIcon({ children, className }: { children: React.ReactNode; className: string }) {
  return <div className={`flex h-[40px] items-center justify-center ${className}`}>{children}</div>;
}

function Taskbar() {
  return (
    <div className="flex h-[40px] bg-gradient-to-r from-[#20383f] via-[#20343f] to-[#1b2842] text-white">
      <TaskIcon className="w-[48px]">
        <svg viewBox="0 0 16 16" className="size-[16px]" fill="#fff">
          <path d="M0 2.200L6.500 1.300V7.600H0ZM7.300 1.200L16 0V7.600H7.300ZM0 8.400H6.500V14.700L0 13.800ZM7.300 8.400H16V16L7.300 14.800Z" />
        </svg>
      </TaskIcon>
      <div className="flex w-[288px] items-center border border-[#c8c8c8] bg-[#f1f1f1] pl-[11px]">
        <svg viewBox="0 0 17 17" className="size-[17px]" fill="none" stroke="#222" strokeWidth="1.300">
          <circle cx="10.500" cy="6.500" r="5.300" />
          <path d="M6.700 10.300L.800 16.200" />
        </svg>
        <span className="ml-[11px] mt-px text-[14.500px] tracking-[-0.28px] text-[#3b3b3b]">Type here to search</span>
        <svg viewBox="0 0 60 38" className="ml-auto mr-[9px] h-[38px] w-[60px]">
          <defs>
            <linearGradient id="sky" x1="0" x2="0" y1="0" y2="1">
              <stop offset="0" stopColor="#d5e2f8" />
              <stop offset="0.250" stopColor="#f6eef6" />
              <stop offset="0.380" stopColor="#f6b9ae" />
              <stop offset="0.500" stopColor="#f9ebb4" />
              <stop offset="0.620" stopColor="#c4ecd0" />
              <stop offset="0.760" stopColor="#b7cff8" />
              <stop offset="0.900" stopColor="#dec4f0" />
            </linearGradient>
          </defs>
          <path d="M8 32C0 28 0 18 7 17C4 11 12 6 17 9C22 2 36 0 42 8C48 5 54 12 51 17C59 17 60 27 53 31C40 36 20 36 8 32Z" fill="url(#sky)" />
          <path d="M17 11C13 18 16 26 12 30M30 5C26 14 29 24 25 30M43 10C40 18 44 25 41 31M51 18C49 23 52 27 50 31" fill="none" stroke="#fff" strokeOpacity="0.500" strokeWidth="3" />
          <path d="M9 38C9 32 11 33 12 29C13 25 17 24 18 29C19 25 22 25 23 30C25 32 27 27 29 30C31 33 33 29 35 32C36 26 39 22 41 27C42 24 45 23 46 30C48 28 49 34 49 38Z" fill="#5f9c1e" />
          <path d="M9 38C15 33 20 37 25 35C32 38 40 33 49 38Z" fill="#2e6911" />
        </svg>
      </div>
      <TaskIcon className="w-[48px]">
        <svg viewBox="0 0 16 16" className="size-[16px]" fill="none" stroke="#fff" strokeWidth="1.200">
          <path d="M.600 0V2.500H10.500V0M.600 5H10.500V11H.600ZM.600 16V13.500H10.500V16M14.500 0V3.500M14.500 9V16M13.500 6H16" />
        </svg>
      </TaskIcon>
      <TaskIcon className="w-[54px]">
        <svg viewBox="0 0 24 24" className="size-[24px]">
          <defs>
            <linearGradient id="edge" x1="0" x2="1" y1="0.300" y2="0.300">
              <stop offset="0" stopColor="#2cafe4" />
              <stop offset="0.600" stopColor="#37c6b8" />
              <stop offset="1" stopColor="#6fe05b" />
            </linearGradient>
          </defs>
          <path d="M.300 11C0 19 5 24 12 23.900C17 23.800 20.500 21.500 22.300 18C19 19.500 16 18 14.500 16L12 8Z" fill="#0f63bb" />
          <path d="M.300 11C1.500 4 7 .200 12 .200C19 .200 24 5.500 23.800 11C23.500 15 20 16.500 17 16.300C14.500 16.200 13.500 15.500 14.500 14C16 11.500 14 8 10 8C6 8 2 9 .300 11Z" fill="url(#edge)" />
          <path d="M8.500 12C8 17 12 21 17 20.500C19 20.300 21 19 22 18C20 22 15 24.500 10.500 23.600C4 22 5 14 8.500 12Z" fill="#2a86da" />
          <path d="M10.500 9.500C8 11 7.500 16 11 18.800C14 21 19 20 22.500 17C19 18.500 15.500 17.500 14 15.500C15 14 15 9 10.500 9.500Z" fill="#15476b" />
        </svg>
      </TaskIcon>
      <TaskIcon className="w-[42px] border-b-2 border-[#76b9ed]">
        <svg viewBox="0 0 22 20" className="h-[20px] w-[22px]">
          <path d="M0 1H8L10 3H21.500V18H0Z" fill="#fbd35c" />
          <path d="M0 1H8L10 3V4H0Z" fill="#e2a41b" />
          <path d="M0 12H21.500V18H0Z" fill="#f7c33c" />
          <path d="M4 11H18V19H14V15H8V19H4Z" fill="#3a8fd6" />
        </svg>
      </TaskIcon>
      <TaskIcon className="w-[56px]">
        <svg viewBox="0 0 24 24" className="size-[24px]">
          <path d="M8 8V4C8 1 16 1 16 4V8" fill="none" stroke="#fff" strokeWidth="1.500" />
          <path d="M1 6H23V21C23 22.500 22 23 21 23H3C2 23 1 22.500 1 21Z" fill="#fff" />
          <path d="M7 9H11.500V13.500H7Z" fill="#f25022" />
          <path d="M12.500 9H17V13.500H12.500Z" fill="#7fba00" />
          <path d="M7 14.500H11.500V19H7Z" fill="#00a4ef" />
          <path d="M12.500 14.500H17V19H12.500Z" fill="#ffb900" />
        </svg>
      </TaskIcon>
      <TaskIcon className="w-[44px]">
        <svg viewBox="0 0 24 20" className="h-[20px] w-[24px]">
          <path d="M0 6.500L12 0L24 6.500V19.500H0Z" fill="#fff" />
          <path d="M0 6.500H24L14 12L16.500 15.500L10.500 12.200Z" fill="#20343f" />
        </svg>
      </TaskIcon>
      <TaskIcon className="ml-[6px] w-[41px] border-b-2 border-[#76b9ed]">
        <svg viewBox="0 0 24 24" className="size-[24px]">
          <circle cx="12" cy="12" r="12" fill="#34a853" />
          <path d="M1.600 6A12 12 0 0 1 22.400 6H12L7 15Z" fill="#ea4335" />
          <path d="M22.400 6A12 12 0 0 1 12 24L17.200 15L17 6Z" fill="#fbbc05" />
          <path d="M22.400 6H12V8L17 15Z" fill="#fbbc05" />
          <circle cx="12" cy="12" r="6" fill="#fff" />
          <circle cx="12" cy="12" r="4.700" fill="#4285f4" />
        </svg>
      </TaskIcon>
      <TaskIcon className="ml-[4px] w-[48px] border-b-2 border-[#76b9ed] bg-[#4d5d66]">
        <svg viewBox="0 0 20 24" className="h-[24px] w-[20px]">
          <path d="M10 0H19.500V24H10Z" fill="#d99a12" />
          <path d="M5 6H14.500V24H5Z" fill="#efbf2c" />
          <path d="M0 12H9.500V24H0Z" fill="#f8dc5c" />
        </svg>
      </TaskIcon>
      <div className="flex flex-1 items-center">
        <svg viewBox="0 0 26 22" className="ml-[225px] h-[22px] w-[26px]">
          <circle cx="17" cy="8" r="7.500" fill="#f6a12c" />
          <path d="M5 21C-1 20 -1 12 5 12C6 5 15 4 17 11C24 10 27 20 20 21Z" fill="#b9d2fb" />
        </svg>
        <span className="ml-[7px] w-[39px] text-[14px] tracking-[-0.6px]">28°C</span>
        <span className="w-[104px] whitespace-nowrap text-[14px] tracking-[-0.28px]">Mostly cloudy</span>
        <svg viewBox="1080 721 170 40" className="h-[40px] w-[170px]" fill="none" stroke="#fff" strokeWidth="1.200">
          <path d="M1087.500 744L1093 738.500L1098.500 744" />
          <path d="M1113 737.500H1120V746.500H1113ZM1120 740L1122.500 738.500V745L1120 744M1114 734.500Q1116.500 732.500 1119 734.500M1114 749Q1116.500 751 1119 749" />
          <path d="M1134 743C1132 738 1137 734 1141 737C1145 735 1148 739 1147 742Z" fill="#b7bcc1" stroke="none" />
          <circle cx="1143.500" cy="743.500" r="4.800" fill="#8a8f94" stroke="none" />
          <path d="M1142 741V746M1145 741V746" />
          <path d="M1157.500 736L1171.500 733.500V747.500L1157.500 746.500ZM1162 742A3.500 3.500 0 1 1 1166 744M1166 737V739.500H1163.500" />
          <circle cx="1169.500" cy="745.500" r="3.500" fill="#2d7ad0" stroke="none" />
          <path d="M1182.500 737.500H1195V745.500H1182.500ZM1196.500 739.500V743.500" />
          <path d="M1185 739.500H1188.500V743.500H1185Z" fill="#fff" />
          <path d="M1208 748A12 12 0 0 1 1220 736M1211 748A9 9 0 0 1 1220 739.500M1214 748A6 6 0 0 1 1220 742.500M1217 748A3 3 0 0 1 1220 745.500" />
          <path d="M1229.500 739.500H1232L1235.500 736V747L1232 744.500H1229.500ZM1238 739.500Q1239.500 742 1238 744.500M1240.500 738Q1243 742 1240.500 746M1243 736.500Q1247 742 1243 747.500" />
        </svg>
        <div className="-mt-px w-[62px] text-center text-[11.800px] leading-[18px] tracking-[-0.45px]">
          <div>3:39 PM</div>
          <div>3/31/2023</div>
        </div>
        <svg viewBox="1312 721 54 40" className="h-[40px] w-[54px]">
          <path d="M1325.500 733H1341.500V746.500H1334L1330 750V746.500H1325.500Z" fill="#fff" />
          <path d="M1328 736.500H1339M1328 739.500H1339M1328 742.500H1335" stroke="#1b2842" />
          <circle cx="1340.500" cy="748" r="7.500" fill="#2c3440" stroke="#a8adb3" />
          <text x="1337.300" y="752" fontSize="11" fontWeight="600" fill="#fff">4</text>
          <path d="M1361.500 721V761" stroke="#6b7484" />
        </svg>
      </div>
    </div>
  );
}

export default function App() {
  return (
    <div className="flex h-[761px] w-[1366px] flex-col overflow-hidden bg-[#f3f2f1] font-['Open_Sans','Noto_Sans',sans-serif]">
      <TitleBar />
      <RibbonTabs />
      <Ribbon />
      <div className="flex h-[543px] shrink-0">
        <Rail />
        <div className="w-[930px] shrink-0">
          <div className="h-[508px] overflow-hidden bg-white pl-[17px] pt-[4px]">
            <ReportPage />
          </div>
          <PageTabs />
        </div>
        <FiltersPane />
        <VisualizationsPane />
        <FieldsPane />
      </div>
      <StatusBar />
      <Taskbar />
    </div>
  );
}
